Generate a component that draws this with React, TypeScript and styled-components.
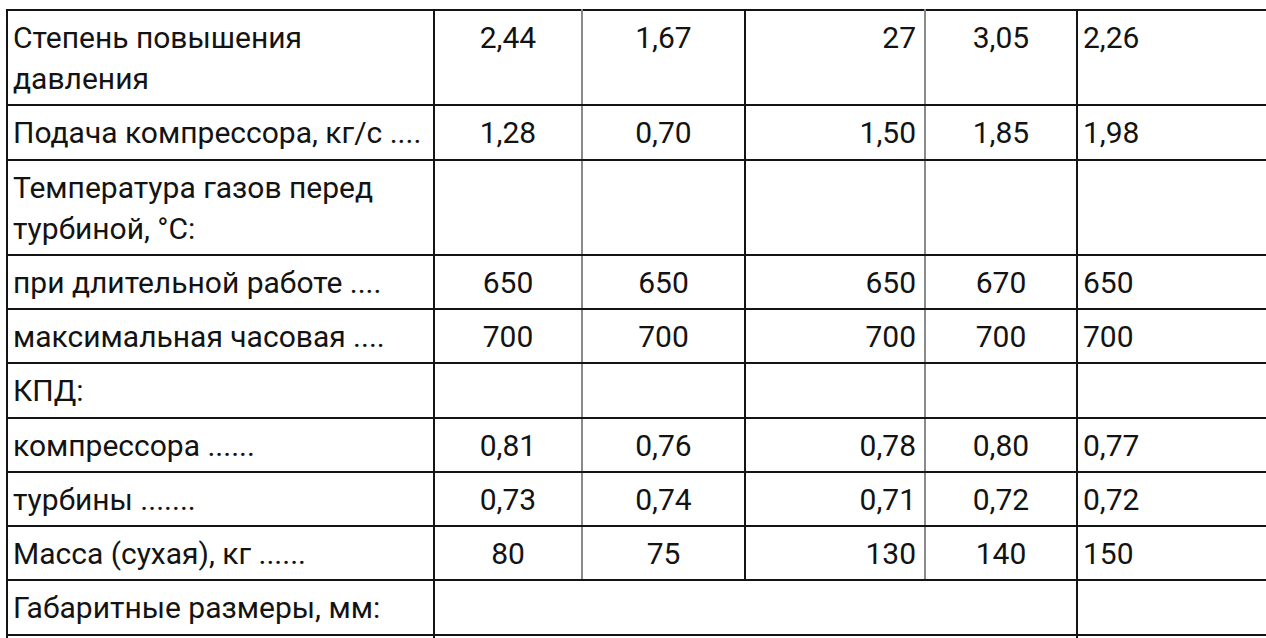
import styled, { createGlobalStyle } from 'styled-components';

const GlobalStyle = createGlobalStyle`
    html, body {
        margin: 0;
        padding: 0;
        background: #ffffff;
        overflow: hidden;
    }
`;

type Align = 'left' | 'center' | 'right';

const Page = styled.div`
    padding: 9px 0 0 6px;
    font-family: Roboto, 'Liberation Sans', sans-serif;
    color: #131313;
`;

const Table = styled.table`
    border-collapse: collapse;
    table-layout: fixed;
    width: 1260px;
    font-size: 30px;
    line-height: 41px;
`;

const Col = styled.col<{ $w: number }>`
    width: ${({ $w }) => $w}px;
`;

const Cell = styled.td<{ $align: Align; $thinRight?: boolean; $thinLeft?: boolean }>`
    border: 2px solid #141414;
    border-right-color: ${({ $thinRight }) => ($thinRight ? '#8a8a8a' : '#141414')};
    border-left-color: ${({ $thinLeft }) => ($thinLeft ? '#8a8a8a' : '#141414')};
    vertical-align: top;
    text-align: ${({ $align }) => $align};
    padding: 6px ${({ $align }) => ($align === 'right' ? '8px' : '6px')} 5.25px
        ${({ $align }) => ($align === 'left' ? '5px' : '6px')};
    white-space: nowrap;
`;

const LabelCell = styled(Cell)`
    padding-left: 5px;
`;

type Row = { label: React.ReactNode; values: string[] };

const rows: Row[] = [
    { label: <>Степень повышения<br />давления</>, values: ['2,44', '1,67', '27', '3,05', '2,26'] },
    { label: 'Подача компрессора, кг/с ....', values: ['1,28', '0,70', '1,50', '1,85', '1,98'] },
    { label: <>Температура газов перед<br />турбиной, °С:</>, values: ['', '', '', '', ''] },
    { label: 'при длительной работе ....', values: ['650', '650', '650', '670', '650'] },
    { label: 'максимальная часовая ....', values: ['700', '700', '700', '700', '700'] },
    { label: 'КПД:', values: ['', '', '', '', ''] },
    { label: 'компрессора ......', values: ['0,81', '0,76', '0,78', '0,80', '0,77'] },
    { label: 'турбины .......', values: ['0,73', '0,74', '0,71', '0,72', '0,72'] },
    { label: 'Масса (сухая), кг ......', values: ['80', '75', '130', '140', '150'] },
];

// alignment of the five numeric columns
const aligns: Align[] = ['center', 'center', 'right', 'center', 'left'];
const widths = [427, 148, 163, 180, 152, 190];

const App = () => (
    <Page>
        <GlobalStyle />
        <Table>
            <colgroup>
                {widths.map((w, i) => (
                    <Col key={i} $w={w} />
                ))}
            </colgroup>
            <tbody>
                {rows.map((row, i) => (
                    <tr key={i}>
                        <LabelCell $align='left'>{row.label}</LabelCell>
                        {row.values.map((v, j) => (
                            <Cell
                                key={j}
                                $align={aligns[j]}
                                $thinRight={j === 0 || j === 2}
                                $thinLeft={j === 1 || j === 3}
                            >
                                {v}
                            </Cell>
                        ))}
                    </tr>
                ))}
                <tr>
                    <LabelCell $align='left'>Габаритные размеры, мм:</LabelCell>
                    <Cell $align='center' colSpan={4} />
                    <Cell $align='left' />
                </tr>
                <tr>
                    <LabelCell $align='left'>&nbsp;</LabelCell>
                    <Cell $align='center' colSpan={4} />
                    <Cell $align='left' />
                </tr>
            </tbody>
        </Table>
    </Page>
);

export default App;
